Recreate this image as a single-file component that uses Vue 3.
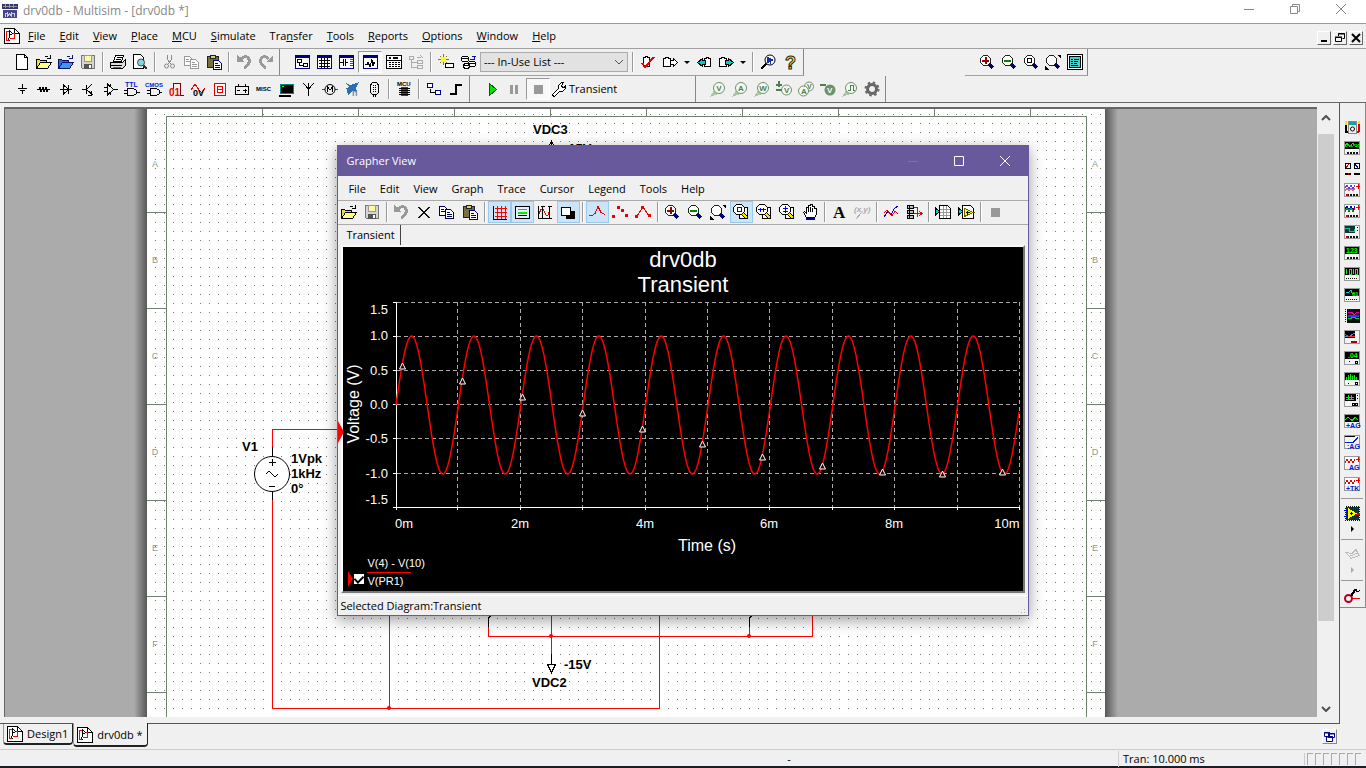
<script setup>
import { h, ref } from 'vue'

const p = (d, stroke = '#000', fill = 'none', w = 1) =>
  `<path d="${d}" stroke="${stroke}" fill="${fill}" stroke-width="${w}"/>`
const t = (text, x, y, size, fill = '#000', extra = '') =>
  `<text x="${x}" y="${y}" font-size="${size}" fill="${fill}" font-weight="bold" ${extra}>${text}</text>`
const c = (x, y, r, stroke, fill = 'none', w = 1) =>
  `<circle cx="${x}" cy="${y}" r="${r}" stroke="${stroke}" fill="${fill}" stroke-width="${w}"/>`

const pane = p('M1.5 1.5h14v13h-14z', '#000080', '#fff') + p('M1 2.5h15', '#000080', 'none', 2)
const page = p('M2.5.5h8l3 3v12h-11z', '#000', '#fff') + p('M10.5.5v3h3')
const folder = (stroke, a, b) =>
  p('M.5 14.5v-9h3l1 1h6v2', stroke, a) +
  p('M.5 14.5l4-6h11l-4 6z', stroke, b) +
  p('M8.5 3.5q2-3 4 0M11 4.5h4M14.5 4.5v-4', stroke)
const copy = (s) =>
  p('M.5 2.5h5l3 3v6h-8z', s, '#fff') + p('M2 5.5h3M2 7.5h5', s) +
  p('M6.5 5.5h5l3 3v6h-8z', s, '#fff') + p('M8 8.5h3M8 10.5h5M8 12.5h5', s)
const lens = (inner) =>
  p('M10 10l4 4', '#000080', 'none', 3) +
  p('M4.5 1.5h4l3 3v4l-3 3h-4l-3-3v-4z', '#222', '#fff') + inner
const pageLens = (inner) =>
  p('M6.5 3.5h8v11h-8z', '#000', '#fff') +
  p('M9 9l5 5', '#000', 'none', 4) + p('M10 10l4 4', '#ffe800', 'none', 2) +
  p('M3.5.5h5l3 3v4l-3 3h-5l-3-3v-4z', '#000', '#fff') + inner
const probe = (inner) => p('M1 15l3-5 3 3z', '#a8c8a8', '#a8c8a8') + c(9, 7, 5.5, '#6a946a', '#f4f8f4') + inner
const pv = (s) => t(s, 9, 10, 8, '#4f8050', 'text-anchor="middle"')
// bench instrument: screen on top, terminals underneath
const bench = (screen, foot) => p('M.5 1.5h15v13h-15z', '#999', '#f4f4f4') + screen + foot
const scr = (d, s = '#00f000', bg = '#000') => p('M1 2h14v7H1z', 'none', bg) + p(d, s)
const pins = '<path d="M3 12.5h11" stroke="#111" stroke-width="2" stroke-dasharray="2 1"/>'
const finePins = '<path d="M2 12.5h12" stroke="#111" stroke-dasharray="1 1"/>'
const redPins = pins + p('M2 12.5h2', '#d00', 'none', 2)
const plus = p('M12 4.5h4M14.5 2v5', '#e00')
const chip = p('M1.5 4.5h2v-1h3v1h2v8h-7z', '#000', '#fff')

const icons = {
  app:
    p('M0 1h16v5H0z', 'none', '#35356b') + p('M1 3.5h14M3.5 1v4M7.5 1v4M11.5 1v4', '#99a') +
    p('M1 7h14v8H1z', 'none', '#45458b') + p('M3.5 14v-3l2-1v3l2-2 2 2v-3l3 1v3', '#ccd'),
  design:
    p('M.5.5h10l5 5v10H.5z', '#000', '#fff') + p('M10.5.5v5h5') +
    p('M2 3.5h3M2.5 4v8M2 12.5h3M9 5.5h1.5v5h-5', '#f00') + p('M5.5 2.5l3 3-3 2zM5.5 8.5l-1 3 2 2'),
  doc: page,
  open: folder('#000', '#e8d850', '#ffff80'),
  openBlue: folder('#10106a', '#1c78d8', '#3a98f0'),
  save:
    p('M1.5 1.5h13v13h-12l-1-1z', '#777', '#d4d4d4') + p('M4.5 1.5h7v6h-7z', '#999', '#fff8a0') +
    p('M4 10h8v5H4z', 'none', '#555') + p('M10 11v3', '#fff', 'none', 2),
  print:
    p('M3.5 7.5l2-6h8l-2 6z', '#000', '#fff') + p('M7 3.5h5M6 5.5h5') +
    p('M.5 8.5h12l3-3v6l-3 3h-11l-1-1z', '#000', '#ddd') + p('M1 11.5h11') + p('M3 13h8', '#666'),
  preview: p('M1.5.5h7l3 3v11h-10z', '#000', '#fff') + p('M11 11l4 4', '#333', 'none', 2) + c(9, 8.5, 3.5, '#444', '#7fd8e8'),
  cut: p('M5.5 1v4l3 5M9.5 1v4l-3 5', '#888') + c(4.5, 12, 2, '#888') + c(10.5, 12, 2, '#888'),
  copyOff: copy('#999'),
  copy: copy('#000050'),
  paste:
    p('M1.5 2.5h11v11h-11z', '#222', '#77703a') + p('M4.5 1.5h5v3h-5z', '#222', '#d8d080') +
    p('M7.5 6.5h5l3 3v6h-8z', '#000080', '#fff') + p('M9 9.5h3M9 11.5h5M9 13.5h5', '#000080'),
  undo: p('M1 1v7h7z', 'none', '#999') + p('M5 5q5-5 8 0 2 5-5 9', '#999', 'none', 3),
  redo: p('M15 1v7H8z', 'none', '#999') + p('M11 5q-5-5-8 0-2 5 5 9', '#999', 'none', 3),
  net: pane + p('M3.5 5.5h4v3h-4zM9.5 9.5h4v3h-4zM5.5 9v2.5h4'),
  sheet: pane + p('M3 6.5h11M3 9.5h11M3 12.5h11M5.5 4v10M8.5 4v10M11.5 4v10'),
  cap: pane + p('M2 8.5h3M5.5 5v7M7.5 5v7M8 8.5h2') + p('M12 5.5h3M12 7.5h3M12 9.5h3M12 11.5h3', '#f00'),
  scope: pane + p('M3 10.5h2l1-2 2 4 2-7 1 6 1-3 1 1'),
  calc: p('M.5 1.5h15v13H.5z', '#000', '#fff') + p('M3 4h2M7 4h5', '#000', 'none', 2) + p('M1 6.5h14') + '<path d="M3 8.5h11M3 10.5h11M3 12.5h11" stroke="#000" stroke-dasharray="2 1"/>',
  tree: p('M1.5 2.5h4v3h-4zM9.5 6.5h5v3h-5zM9.5 11.5h5v3h-5zM3.5 6v7h6M3.5 8.5h6M9 3.5h4M12.5 1l2 3', '#aaa'),
  wizard: p('M5.5 0v11M0 5.5h11M2 2l7 7M9 2l-7 7', '#887800') + p('M3 3h5v5H3z', 'none', '#ff0') + p('M7.5 9.5h8v4h-8z', '#000', '#fff'),
  db:
    ['M1.5 3.5q3.5-3 7 0v3q-3.5 3-7 0zM1.5 3.5q3.5 3 7 0', 'M8.5 8.5q3.5-3 7 0v3q-3.5 3-7 0zM8.5 8.5q3.5 3 7 0', 'M3.5 10.5q3-2 6 0v3q-3 2-6 0zM3.5 10.5q3 2 6 0']
      .map((d) => p(d, '#000', '#fff')).join('') + p('M10 5.5h4v-3M12 2.5h4', '#0010c0'),
  erc: p('M3.5 12.5v-9h2v-1h2v1h2v9z', '#000', '#fff') + p('M2 9l3 4 9-10', '#e00', 'none', 2),
  fwd: chip + p('M8.5 6.5h3v-2l4 4-4 4v-2h-3z', '#000', '#fff'),
  back: p('M8.5 4.5h2v-1h2v1h2v8h-6z', '#000', '#fff') + p('M9.5 6.5h-3v-2l-5 4 5 4v-2h3z', '#000', '#0cc'),
  fwdC: chip + p('M7.5 6.5h3v-2l5 4-5 4v-2h-3z', '#000', '#0cc'),
  find: p('M1 15l6-6', '#000', 'none', 2) + c(10, 6, 5, '#000', '#fff') + p('M7 3l6 3-6 3z', '#1030a0', '#1030a0') + p('M10.5 6v4', '#1030a0'),
  help: t('?', 3, 15, 18, '#ffe800', 'stroke="#222" stroke-width="1"'),
  zoomIn: lens(p('M3 6.5h7M6.5 3v7', '#900', 'none', 2)),
  zoomOut: lens(p('M3 6.5h7', '#080', 'none', 2)),
  zoomArea: lens(p('M4.5 4.5h4v4h-4z')),
  zoomFit: lens('') + p('M12 1h4v4zM0 12v4h4z', 'none', '#000'),
  full: p('M.5.5h15v15H.5z', '#000', '#fff') + p('M2.5 2.5h11v11h-11z', '#000', '#40d0d0') + p('M4 5.5h2M7 5.5h5M4 7.5h2M7 7.5h4M4 9.5h2M7 9.5h3M4 11.5h7'),
  power: p('M8.5 3v4M4 7.5h9M6 9.5h5M8.5 10v3'),
  resistor: p('M1 8.5h2l1-2 1 4 2-4 1 4 2-4 1 4 1-2h2'),
  diode: p('M2 8.5h12M10.5 4v9M5.5 4v9l5-4.5z'),
  transistor: p('M2 8.5h4M6.5 4v9M7 8l5-5M7 9l6 5M11 10v4h-3'),
  analog: p('M5.5 3v11l6-5.5zM2 6.5h3M2 10.5h3M12 8.5h4M8.5 3v2M8.5 12v2'),
  ttl: p('M3.5 7.5h4q5 0 5 3.5t-5 3.5h-4zM0 9.5h3M0 12.5h3M13 11.5h3') + t('TTL', 1, 6, 7, '#0020e0'),
  cmos: p('M4.5 7.5h4q5 0 5 3.5t-5 3.5h-4zM1 9.5h3M1 12.5h3M14 11.5h2') + t('CMOS', -1, 6, 6, '#0020e0'),
  digital: p('M5.5 8v-6h7v12h3', '#800000') + t('01', 1, 15, 10, '#e00'),
  mixed: p('M1 9l4-6 4 6M9 9l3 3 3-5', '#e00') + t('0V', 3, 15, 9),
  indicator: p('M2.5 2.5h11v12h-11z', '#e00', '#fff') + p('M5 5.5h6M5 8.5h6M5 11.5h6M5.5 6v5M10.5 6v5', '#e00'),
  battery: p('M1.5 5.5h13v8h-13zM4.5 3v2M11.5 3v2M3 9.5h3M9 9.5h4M11.5 8v4'),
  misc: t('MISC', 0, 10, 6),
  terminal: p('M2.5 3.5h13v9h-13z', '#088', '#000') + p('M4 5.5h2', '#0f0') + p('M1 14.5h12', '#000', 'none', 2),
  antenna: p('M8.5 15v-13M3 2l5.5 6L14 2'),
  motor: p('M0 8.5h3M13 8.5h3', '#e00') + c(8, 8.5, 5, '#000') + p('M5.5 11v-5l2.5 3 2.5-3v5'),
  ni: p('M0 1l6 3 9-3-3 6 1 4-5-1-4 5-1-6-1-2 3-1z', 'none', '#2a6fb0') + t('n', 8, 15, 9, '#888'),
  connector: p('M5.5 2.5l1-1h4l1 1 1 2v7l-2 2h-4l-2-2v-7zM7.5 14v2M9.5 14v2') + '<path d="M7.5 4v8M9.5 4v8" stroke="#000" stroke-dasharray="1 1"/>',
  mcu: t('MCU', 1, 5, 6) + p('M5 6h7v9H5z', 'none', '#444') + p('M3 7.5h11M3 9.5h11M3 11.5h11M3 13.5h11'),
  hier: p('M1.5 2.5h5v4h-5zM9.5 9.5h5v4h-5z', '#000080', '#fff') + p('M4.5 8v3.5h4'),
  bus: p('M2 13h6V4h6', '#000', 'none', 2),
  play: p('M5.5 2.5l7 6-7 6z', '#006000', '#00e800'),
  pause: p('M5.5 4v9M10.5 4v9', '#999', 'none', 3),
  stop: p('M4 4h9v9H4z', 'none', '#999'),
  wrench: p('M1.5 13.5l6-6v-3l3-3h2l-2 3 1 2h2l1-2v3l-3 3h-3l-5 5-2-1z', '#000', '#fff'),
  pV: probe(pv('V')),
  pA: probe(pv('A')),
  pW: probe(pv('W')),
  pPM: c(10.5, 9, 5, '#6a946a', '#f4f8f4') + t('V', 8, 12, 8, '#4f8050') + p('M0 3.5h6M3 0v6M0 8.5h6', '#4f8050', 'none', 2),
  pAV: c(11, 5.5, 4.5, '#6a946a', '#f4f8f4') + c(5.5, 10, 5, '#6a946a', '#f4f8f4') + t('A', 3, 13, 8, '#4f8050') + t('V', 9, 8, 7, '#4f8050'),
  pRef: c(10, 9, 5.5, 'none', '#6a946a') + t('V', 7, 12, 8, '#fff') + p('M0 3.5h6', '#4f8050', 'none', 2),
  pDig: probe(p('M6 9.5h2v-5h3v5h2', '#4f8050')),
  gear: c(8, 8, 4.5, '#666', 'none', 3) + '<circle cx="8" cy="8" r="6.5" fill="none" stroke="#666" stroke-width="2" stroke-dasharray="2.5 2.6"/>',
  del: p('M3 3l10 11M13 3L3 14', '#111', 'none', 1.5),
  grid: p('M2.5 2v13.5H16') + p('M4 4.5h12M4 8.5h12M4 12.5h12M6.5 2v13M10.5 2v13M14.5 2v13', '#f00'),
  legend: p('M1.5 2.5h14v12h-14z', '#000', '#e8f0f8') + p('M4 5.5h9', '#f44') + p('M4 8.5h9', '#0e0', 'none', 2) + p('M4 11.5h9', '#000080'),
  cursors: p('M1.5 2v13M1 14.5h14') + p('M2 10l2-5 2 0 3 6h2l2-6', '#e00') + p('M5.5 2v12M12.5 2v12M4 2.5h4M11 2.5h4'),
  invert: p('M6 7h9v8H6z', 'none', '#000') + p('M1.5 3.5h9v8h-9z', '#000', '#fff'),
  curve: p('M0 11.5h3l3-2 3-7 3 6 4 2', '#e00'),
  dots: p('M0 11h3v3H0zM5 2h3v3H5zM9 5h3v3H9zM13 10h3v3h-3z', 'none', '#e00'),
  both: p('M2 12l6-9 6 9', '#e00') + p('M0 11h3v3H0zM6 2h3v3H6zM13 10h3v3h-3z', 'none', '#e00'),
  zRect: pageLens(p('M4.5 3.5h4v4h-4z', '#00f')),
  zHor: pageLens(p('M2 5.5h8M4.5 3.5v4M7.5 3.5v4', '#00f')),
  zVer: pageLens(p('M6.5 2v7M4 4.5h5M4 7.5h5', '#00f')),
  hand: p('M4.5 13.5l-3-5 1-1 2 2v-6h2v-2h2v-1h2v2h2v2h2v6l-2 3z', '#000', '#fff') + p('M6.5 4v4M8.5 3v5M10.5 4v4') + p('M4 15h9', '#000080', 'none', 2),
  text: t('A', 2, 14, 17, '#000', 'style="font-family:Liberation Serif,serif"'),
  xy: t('(x,y)', 0, 8, 8, '#aaa', 'font-style="italic"') + p('M2 15l5-6', '#aaa'),
  overlay: p('M1 13l4-6 3 4 3-6 4-3', '#00c') + p('M1 9l3-3 5 6 3-5 3 3', '#e00'),
  digin: p('M1.5 1.5h6v3h-6zM1.5 6.5h6v3h-6zM1.5 11.5h6v3h-6zM3.5 1v13', '#000', '#bbb') + p('M8 3.5h3v9M8 9.5h7M13 7l3 2.5-3 2.5', '#e00'),
  table: p('M4.5 1.5h8l3 3v10h-11z', '#000', '#fff') + p('M5 5.5h10M5 8.5h10M5 11.5h10M8.5 2v12M11.5 2v12', '#999') + p('M.5 4v7l4-3.5z', '#000', '#0cc'),
  lab: p('M4.5 1.5h8l3 3v10h-11z', '#000', '#fff') + p('M6.5 4.5l9 4-9 4z', '#660', '#ff0') + p('M.5 4v7l4-3.5z', '#000', '#0cc') + p('M8 8.5h4M9.5 7v4'),
  multimeter:
    p('M4.5 2.5h8v12h-8z', '#888', '#eee') + p('M5 4h7', '#0aa', 'none', 3) + c(8.5, 10, 2, '#000', '#fff') +
    p('M2 2v4', '#fd0', 'none', 2) + p('M2 6v7h2', '#000', 'none', 2) + p('M15 2v3', '#fd0', 'none', 2) + p('M15 5v7l-2 2', '#d00', 'none', 2),
  func: bench(scr('M1 6l2-3 3 4 3-4 3 4 3-3') + p('M1 7l4-2 3 2 4-3 3 3', '#0a0'), pins),
  watt: p('M1.5 2.5h5v5h-5zM10.5 2.5h5v5h-5z', '#000', '#fff') + p('M2 7l3-4', '#c00') + p('M14 7l-3-4', '#00c') + p('M1 12.5h6M10 12.5h6', '#000', 'none', 2) + p('M4 12.5h1', '#c00', 'none', 2),
  osc: bench(scr('M1 5.5l2-2 2 3 2-3 2 3 2-3', '#44f', '#fff') + p('M1 8.5l2-2 2 2 2-2 2 2 2-2', '#e66') + plus, redPins),
  osc4: bench(scr('M1 8.5l2-3 2 3 2-3 2 3 2-3', '#e00', '#fff') + p('M1 5.5l2-2 2 3 2-3 2 3 2-3', '#00c') + p('M1 7l2-2 2 3 2-3 2 3', '#0a0') + plus, redPins),
  bode: bench(scr('M1 4.5h4v3h5v-3', '#0c8', '#083838') + p('M11 2h4v7h-4z', 'none', '#f4f4f4') + p('M13.5 3v1M13.5 6v1'), redPins),
  freq: bench(scr('') + t('123', 2, 8, 7, '#0f0'), pins),
  word: bench(scr('M2.5 3v5M5.5 3v5h2v-5zM9.5 3v5M11.5 3v5h2v-5z', '#0f0'), finePins),
  convert: bench(scr('M2 5h3q3-4 3 1h2', '#0cc') + t('01', 8, 9, 6, '#0f0'), finePins),
  logic: p('M3 1h13v14H3z', 'none', '#111') + p('M4 4.5h4l2 2 3-2h2', '#e0a') + p('M4 7.5h11', '#33f', 'none', 2) + p('M4 10.5h3v-1h4v1h4', '#0c0') + '<path d="M1.5 1v14" stroke="#111" stroke-dasharray="1 1"/>',
  iv: bench(scr('M1 7.5h4l5-3h1', '#38f') + p('M1 5.5l4 2h6', '#e33') + p('M11 2h4v7h-4z', 'none', '#f4f4f4'), p('M7 12.5h6', '#a00', 'none', 2)),
  dist: bench(scr('') + t('.04', 4, 8, 7, '#0f0'), p('M11.5 11.5h2v2h-2zM5 11.5h1')),
  spec: bench(scr('M2.5 9v-3M4.5 9v-5M6.5 9v-6M8.5 9v-4M10.5 9v-5M12.5 9v-3'), p('M11.5 11.5h2v2h-2zM4 12.5h1')),
  netan: bench(scr('M2 5.5h8M2 7.5h8M4.5 3v5M7.5 3v5') + p('M12 2h3v7h-3z', 'none', '#f4f4f4') + p('M13.5 3v1M13.5 6v1'), p('M8.5 11.5h2v2h-2zM11.5 11.5h2v2h-2z')),
  agGen: bench(scr('M1 6.5l3-2 4 3 3-3 3 2'), t('+AG', 2, 15, 7, '#0020d0')),
  agMul: bench(p('M1 8.5h8l5-5', '#0020d0') + p('M1 2.5h10'), t(':AG', 3, 15, 7, '#0020d0')),
  agOsc: bench(scr('M1 7.5l2-3 2 3 2-3 2 3 2-3', '#e00', '#fff') + plus, t('AG', 5, 15, 7, '#0020d0')),
  tkOsc: bench(scr('M1 7.5l2-3 2 3 2-3 2 3 2-3', '#e00', '#fff') + plus, t('+TK', 2, 15, 7, '#0020d0')),
  labview: p('M2 2h13v13H2z', 'none', '#063838') + '<path d="M1.5 1.5h14v14h-14z" fill="none" stroke="#111" stroke-dasharray="1 1"/>' + p('M0 5.5h4M0 11.5h4', '#00f') + p('M12 8.5h4', '#e00', 'none', 2) + p('M4 3l9 5.5L4 14z', 'none', '#ff0') + p('M6 8.5h3M7.5 7v3'),
  elvis: p('M2 6.5l5 6 8-3-3-6-4 4z', '#bbb') + p('M6 10l8-3', '#bbb'),
  clamp: c(4.5, 11.5, 3.5, '#b00020', 'none', 2) + p('M7 9l4-6', '#000', 'none', 2) + p('M10 2.5h2v2h2l2-1') + p('M8 11.5h8', '#e00')
}

const Icon = ({ name }) => h('svg', { class: 'icon', viewBox: '0 0 16 16', 'aria-hidden': true, innerHTML: icons[name] })
Icon.props = ['name']

// '|' is a separator, a trailing '>' adds a drop-down arrow, a leading '*' is pressed
const parse = (s) =>
  s.split(' ').map((k) => ({
    sep: k === '|',
    on: k[0] === '*',
    more: k.endsWith('>'),
    name: k.replace(/[*>]/g, '')
  }))

const menus = ['File', 'Edit', 'View', 'Place', 'MCU', 'Simulate', 'Tra_nsfer', 'Tools', 'Reports', 'Options', 'Window', 'Help'].map((m) => {
  const i = Math.max(m.indexOf('_'), 0)
  const s = m.replace('_', '')
  return [s.slice(0, i), s[i], s.slice(i + 1)]
})
const fileBar = parse('doc open openBlue save | print preview | cut copyOff paste | undo redo')
const viewBar = parse('net sheet cap *scope calc tree | wizard db')
const toolBar = parse('| erc fwd> back fwdC> | find help')
const zoomBar = parse('zoomIn zoomOut zoomArea zoomFit full')
const partsBar = parse('power resistor diode transistor analog ttl cmos digital mixed indicator battery misc terminal antenna motor ni connector | mcu | hier bus')
const simBar = parse('play pause *stop')
const probeBar = parse('pV pA pW pPM pAV pRef pDig gear')
const graphBar = parse('open save | undo del copy paste | *grid *legend cursors *invert | *curve dots both | zoomIn zoomOut zoomFit *zRect zHor zVer hand | text xy | overlay digin | table lab | stop')
const instruments = parse('multimeter func watt osc osc4 bode freq word convert logic iv dist spec netan agGen agMul agOsc tkOsc | labview> | elvis> | clamp')
const graphMenus = ['File', 'Edit', 'View', 'Graph', 'Trace', 'Cursor', 'Legend', 'Tools', 'Help']

const rows = ['A', 'B', 'C', 'D', 'E', 'F'].map((name, i) => ({ name, y: 167 + i * 96, tick: 212 + i * 96 }))
const colTicks = Array.from({ length: 9 }, (_, i) => 262 + i * 96)

const traceOn = ref(true)
const X0 = 396
const Y0 = 405
const MS = 62.4
const volts = (x) => Y0 - 69 * Math.sin(((x - X0) / MS) * 2 * Math.PI)
const wave = Array.from({ length: 624 }, (_, i) => `${X0 + i},${volts(X0 + i).toFixed(1)}`).join(' ')
const marks = Array.from({ length: 11 }, (_, i) => 402 + i * 60).map((x) => ({ x, y: Math.round(volts(x)) }))
const yAxis = [
  { label: '1.5', y: 302, text: 314 },
  { label: '1.0', y: 336, text: 340 },
  { label: '0.5', y: 370, text: 375 },
  { label: '0.0', y: 404, text: 409 },
  { label: '-0.5', y: 438, text: 443 },
  { label: '-1.0', y: 473, text: 478 },
  { label: '-1.5', y: 507, text: 504 }
]
const xAxis = [
  { label: '0m', x: 404 },
  { label: '2m', x: 520 },
  { label: '4m', x: 645 },
  { label: '6m', x: 769 },
  { label: '8m', x: 894 },
  { label: '10m', x: 1007 }
]
const xGrid = Array.from({ length: 10 }, (_, i) => Math.round(X0 + (i + 1) * MS) - 1)
</script>

<template>
  <div class="app">
    <header class="titlebar">
      <Icon name="app" />
      <h1>drv0db - Multisim - [drv0db *]</h1>
      <div class="caption">
        <button aria-label="Minimize"><svg viewBox="0 0 12 12"><path d="M1 6.5h10" /></svg></button>
        <button aria-label="Restore"><svg viewBox="0 0 12 12"><path d="M1.5 3.5h7v7h-7zM3.5 3v-1.5h7v7h-1.5" /></svg></button>
        <button aria-label="Close"><svg viewBox="0 0 12 12"><path d="M1 1l10 10M11 1L1 11" /></svg></button>
      </div>
    </header>

    <nav class="menubar">
      <Icon name="design" />
      <button v-for="m in menus" :key="m.join('')">{{ m[0] }}<u>{{ m[1] }}</u>{{ m[2] }}</button>
      <div class="mdi">
        <button aria-label="Minimize document"><svg viewBox="0 0 12 12"><path d="M3 9h6" stroke-width="2" /></svg></button>
        <button aria-label="Restore document"><svg viewBox="0 0 12 12"><path d="M1.5 5.5h6v4h-6zM1 5h7M4.5 4v-2.5h6v5h-2M4 2h7" /></svg></button>
        <button aria-label="Close document"><svg viewBox="0 0 12 12"><path d="M2 2l8 8M10 2l-8 8" stroke-width="2" /></svg></button>
      </div>
    </nav>

    <div class="toolrow">
      <div class="group">
        <template v-for="(b, i) in fileBar" :key="i">
          <i v-if="b.sep" class="sep"></i>
          <button v-else class="tool" :aria-label="b.name"><Icon :name="b.name" /></button>
        </template>
      </div>
      <div class="group view">
        <template v-for="(b, i) in viewBar" :key="i">
          <i v-if="b.sep" class="sep"></i>
          <button v-else class="tool" :class="{ pressed: b.on }" :aria-label="b.name"><Icon :name="b.name" /></button>
        </template>
        <div class="inuse">
          <select aria-label="In-use list"><option>--- In-Use List ---</option></select>
          <svg viewBox="0 0 10 6"><path d="M1 1l4 4 4-4" /></svg>
        </div>
        <template v-for="(b, i) in toolBar" :key="i">
          <i v-if="b.sep" class="sep"></i>
          <button v-else class="tool" :aria-label="b.name"><Icon :name="b.name" /></button>
          <button v-if="b.more" class="more" :aria-label="b.name + ' options'"></button>
        </template>
      </div>
      <div class="group zoom">
        <button v-for="b in zoomBar" :key="b.name" class="tool" :aria-label="b.name"><Icon :name="b.name" /></button>
      </div>
    </div>

    <div class="toolrow second">
      <div class="group">
        <template v-for="(b, i) in partsBar" :key="i">
          <i v-if="b.sep" class="sep"></i>
          <button v-else class="tool" :aria-label="b.name"><Icon :name="b.name" /></button>
        </template>
      </div>
      <div class="group sim">
        <button v-for="b in simBar" :key="b.name" class="tool" :class="{ pressed: b.on }" :aria-label="b.name"><Icon :name="b.name" /></button>
        <button class="analysis"><Icon name="wrench" />Transient</button>
      </div>
      <div class="group">
        <button v-for="b in probeBar" :key="b.name" class="tool" :aria-label="b.name"><Icon :name="b.name" /></button>
      </div>
    </div>

    <div class="body">
      <main class="main">
        <div class="editor">
          <div class="canvas">
            <div class="desk left"></div>
            <div class="sheet">
              <svg class="schematic" viewBox="147 109 958 608">
                <defs>
                  <pattern id="dots" x="155" y="114" width="9" height="9" patternUnits="userSpaceOnUse">
                    <rect width="1" height="1" fill="#777" />
                  </pattern>
                </defs>
                <rect x="147" y="109" width="958" height="608" fill="url(#dots)" />
                <g class="frame">
                  <path d="M166.5 717V116.5h920V717" />
                  <path v-for="x in colTicks" :key="x" :d="`M${x}.5 109v7`" />
                  <path v-for="r in rows" :key="r.name" :d="`M147 ${r.tick}.5h19M1087 ${r.tick}.5h18`" />
                </g>
                <g v-for="r in rows" :key="r.name" class="zone">
                  <text x="155" :y="r.y">{{ r.name }}</text>
                  <text x="1095" :y="r.y">{{ r.name }}</text>
                </g>
                <g class="wire">
                  <path d="M340 429.5h-67.5V447M272.5 500V708.5h387V610M389.5 610v98" />
                  <path d="M488.5 627v9.5h324V610M551.5 610v44M749.5 627v9" />
                </g>
                <g class="dot">
                  <circle cx="389" cy="708" r="2" />
                  <circle cx="551" cy="636" r="2" />
                  <circle cx="749" cy="636" r="2" />
                </g>
                <g class="part">
                  <circle cx="272" cy="474" r="17.5" />
                  <path d="M272.5 447v10M272.5 491v9M269 462.5h7M272.5 459v7M269 486.5h6M266 474l3-3 3 3 3 3 3-3" />
                  <path d="M488.5 627v-9l3-3M749.5 627v-9l3-3M551.5 654v10M547.5 664.5h8l-4 8zM551.5 140v14M549 145l2.5-3 2.5 3" />
                </g>
                <g class="label">
                  <text x="242" y="451">V1</text>
                  <text x="291" y="463">1Vpk</text>
                  <text x="291" y="478">1kHz</text>
                  <text x="291" y="493">0°</text>
                  <text x="533" y="134">VDC3</text>
                  <text x="564" y="153">-15V</text>
                  <text x="564" y="669">-15V</text>
                  <text x="532" y="687">VDC2</text>
                </g>
              </svg>

              <section class="grapher" aria-label="Grapher View">
                <svg class="probe" viewBox="0 0 6 22"><path d="M0 0l6 11-6 11z" /></svg>
                <header>
                  <h2>Grapher View</h2>
                  <button aria-label="Minimize grapher" disabled><svg viewBox="0 0 12 12"><path d="M1 6.5h10" /></svg></button>
                  <button aria-label="Maximize grapher"><svg viewBox="0 0 12 12"><path d="M1.5 1.5h9v9h-9z" /></svg></button>
                  <button aria-label="Close grapher"><svg viewBox="0 0 12 12"><path d="M1 1l10 10M11 1L1 11" /></svg></button>
                </header>
                <nav><button v-for="m in graphMenus" :key="m">{{ m }}</button></nav>
                <div class="gtools">
                  <template v-for="(b, i) in graphBar" :key="i">
                    <i v-if="b.sep" class="sep"></i>
                    <button v-else class="tool" :class="{ active: b.on }" :aria-label="b.name"><Icon :name="b.name" /></button>
                  </template>
                </div>
                <div class="gtabs"><button>Transient</button></div>
                <div class="plot">
                  <svg class="chart" viewBox="343 247 680 308">
                    <g class="title">
                      <text x="683" y="267">drv0db</text>
                      <text x="683" y="292">Transient</text>
                    </g>
                    <g class="gridlines">
                      <path v-for="r in yAxis.slice(0, 6)" :key="r.y" :d="`M397 ${r.y}.5H1020`" />
                      <path v-for="x in xGrid" :key="x" :d="`M${x}.5 302V507`" />
                    </g>
                    <g class="axis">
                      <path d="M396.5 302V507.5H1020M396.5 507v3" />
                      <path v-for="r in yAxis" :key="r.y" :d="`M393 ${r.y}.5h4`" />
                      <path v-for="x in xGrid" :key="x" :d="`M${x}.5 507v3`" />
                    </g>
                    <text v-for="r in yAxis" :key="r.label" x="388" :y="r.text" class="tick end">{{ r.label }}</text>
                    <text v-for="a in xAxis" :key="a.label" :x="a.x" y="528" class="tick mid">{{ a.label }}</text>
                    <text x="707" y="551" class="name">Time (s)</text>
                    <text transform="translate(359 404) rotate(-90)" class="name">Voltage (V)</text>
                    <g v-if="traceOn">
                      <polyline :points="wave" class="trace" />
                      <path v-for="m in marks" :key="m.x" :d="`M${m.x}.5 ${m.y - 3}l3 6h-6z`" class="mark" />
                    </g>
                  </svg>
                  <div class="glegend">
                    <svg viewBox="0 0 5 16"><path d="M0 0l5 8-5 8z" /></svg>
                    <input id="trace" v-model="traceOn" type="checkbox" />
                    <label for="trace"><span>V(4) - V(10)</span><span>V(PR1)</span></label>
                  </div>
                </div>
                <footer>Selected Diagram:Transient<i class="grip"></i></footer>
              </section>
            </div>
            <div class="desk right"></div>
          </div>
          <div class="scroll">
            <button aria-label="Scroll up"><svg viewBox="0 0 10 6"><path d="M1 5l4-4 4 4" /></svg></button>
            <div class="track"><div class="thumb"></div></div>
            <button aria-label="Scroll down"><svg viewBox="0 0 10 6"><path d="M1 1l4 4 4-4" /></svg></button>
          </div>
        </div>
        <div class="tabs">
          <button><Icon name="design" />Design1</button>
          <button class="current"><Icon name="design" />drv0db *</button>
          <button class="windows" aria-label="Windows">
            <svg viewBox="0 0 12 12"><path d="M1.5 1.5h5v4h-5zM5.5 2.5h6v4h-6zM3.5 5.5h6v5h-6zM1 2h6M5 3h7M3 6h7" /></svg>
          </button>
        </div>
      </main>
      <aside class="instruments">
        <div class="rack">
          <template v-for="(b, i) in instruments" :key="i">
            <i v-if="b.sep" class="hsep"></i>
            <button v-else class="tool" :aria-label="b.name"><Icon :name="b.name" /></button>
            <button v-if="b.more" class="flyout" :class="{ off: b.name === 'elvis' }" :aria-label="b.name + ' options'"></button>
          </template>
        </div>
      </aside>
    </div>

    <footer class="status">
      <span class="msg">-</span>
      <span class="tran">Tran: 10.000 ms</span>
      <span class="progress"><i v-for="n in 7" :key="n"></i></span>
    </footer>
  </div>
</template>

<style>
body {
  background: #f0f0f0;
  overflow: hidden;
}
.icon {
  display: block;
  flex: none;
  width: 16px;
  height: 16px;
  overflow: visible;
  shape-rendering: crispEdges;
  font-family: 'Liberation Sans', Arial, sans-serif;
}
.icon circle {
  shape-rendering: auto;
}
</style>

<style scoped>
* {
  box-sizing: border-box;
}
.app {
  display: flex;
  flex-direction: column;
  height: 100vh;
  background: #f0f0f0;
  border-bottom: 2px solid #1c1c24;
  font: 11px/16px 'Open Sans', 'Noto Sans', sans-serif;
  color: #000;
}
button {
  font: inherit;
  color: inherit;
  background: none;
  border: 0;
  padding: 0;
  margin: 0;
}
h1,
h2 {
  font-size: 11px;
  font-weight: normal;
  margin: 0;
}

.titlebar {
  display: flex;
  align-items: flex-start;
  height: 24px;
  padding: 3px 2px 0;
  background: #fff;
  border-bottom: 1px solid #999;
}
.titlebar h1 {
  flex: 1;
  margin-left: 5px;
  font-size: 12px;
  color: #888;
}
.caption {
  display: flex;
}
.caption button {
  width: 46px;
  height: 16px;
}
.caption svg {
  width: 12px;
  height: 12px;
  fill: none;
  stroke: #888;
}

.menubar {
  display: flex;
  align-items: center;
  height: 25px;
  padding: 0 3px 0 4px;
  border-bottom: 1px solid #a0a0a0;
}
.menubar > button {
  margin-left: 14px;
}
.menubar > .icon + button {
  margin-left: 8px;
}
.mdi {
  display: flex;
  gap: 2px;
  margin: 4px 0 0 auto;
}
.mdi button {
  display: grid;
  place-items: center;
  width: 14px;
  height: 14px;
  border: 1px solid;
  border-color: #fff #666 #666 #fff;
}
.mdi svg {
  width: 12px;
  height: 12px;
  fill: none;
  stroke: #000;
}

.toolrow {
  display: flex;
  height: 27px;
}
.toolrow.second {
  height: 26px;
}
.group {
  display: flex;
  align-items: center;
  padding: 0 2px 0 11px;
  border-right: 1px solid #888;
  border-bottom: 1px solid #a0a0a0;
}
.second .group {
  border-bottom: 0;
}
.view {
  padding-right: 2px;
}
.zoom {
  margin-left: 161px;
  padding-right: 1px;
}
.sim {
  width: 226px;
}
.tool {
  display: grid;
  place-items: center;
  flex: none;
  width: 22px;
  height: 22px;
}
.pressed {
  width: 24px;
  margin: 0 1px;
  background: #f8f8f8;
  border: 1px solid;
  border-color: #999 #fff #fff #999;
}
.sep {
  flex: none;
  width: 2px;
  height: 20px;
  margin: 0 3px;
  border-left: 1px solid #999;
  border-right: 1px solid #fff;
}
.more {
  width: 12px;
  height: 22px;
  display: grid;
  place-items: center;
}
.more::after {
  content: '';
  border: 3px solid transparent;
  border-top-color: #000;
  border-bottom: 0;
}
.inuse {
  position: relative;
  margin: 0 1px;
}
.inuse select {
  display: block;
  width: 148px;
  height: 20px;
  padding: 0 3px;
  appearance: none;
  border: 1px solid #aaa;
  border-radius: 0;
  background: #e2e2e2;
  color: #000;
  font: inherit;
}
.inuse svg {
  position: absolute;
  right: 4px;
  top: 7px;
  width: 10px;
  height: 6px;
  fill: none;
  stroke: #555;
}
.analysis {
  display: flex;
  align-items: center;
  gap: 2px;
}

.body {
  flex: 1;
  display: flex;
  min-height: 0;
  border-top: 1px solid #666;
}
.main {
  flex: 1;
  display: flex;
  flex-direction: column;
  min-width: 0;
}
.editor {
  flex: 1;
  display: flex;
  min-height: 0;
  padding: 4px 5px 6px 4px;
  border-right: 1px solid #555;
  border-bottom: 1px solid #555;
}
.canvas {
  flex: 1;
  display: flex;
  overflow: hidden;
  border-left: 1px solid #666;
  border-top: 2px solid #666;
}
.desk.left {
  flex: 142 0 0;
  background: linear-gradient(to left, #585858, #ababab 13px);
}
.desk.right {
  flex: 211 0 0;
  background: linear-gradient(to right, #585858, #ababab 13px);
}
.sheet {
  position: relative;
  flex: none;
  width: 958px;
  background: #fff;
}
.schematic {
  display: block;
  width: 958px;
  height: 608px;
  shape-rendering: crispEdges;
}
.schematic circle {
  shape-rendering: auto;
}
.frame path {
  fill: none;
  stroke: #708070;
}
.zone text {
  font: 9px 'Liberation Sans', Arial, sans-serif;
  text-anchor: middle;
  fill: #8a9a8a;
}
.wire path {
  fill: none;
  stroke: #f00;
}
.dot circle {
  fill: #f00;
}
.part circle {
  fill: #fff;
  stroke: #000;
}
.part path {
  fill: none;
  stroke: #000;
}
.label text {
  font: bold 13px 'Liberation Sans', Arial, sans-serif;
}

.scroll {
  display: flex;
  flex-direction: column;
  width: 17px;
  padding: 2px 0 0 1px;
}
.scroll button {
  height: 17px;
  display: grid;
  place-items: center;
}
.scroll svg {
  width: 10px;
  height: 6px;
  fill: none;
  stroke: #505050;
  stroke-width: 2;
}
.track {
  flex: 1;
  padding-top: 8px;
}
.thumb {
  height: 86%;
  background: #cdcdcd;
}

.tabs {
  display: flex;
  align-items: flex-start;
  height: 25px;
  padding: 0 3px;
}
.tabs button {
  display: flex;
  align-items: center;
  gap: 4px;
  height: 21px;
  padding: 1px 4px 0 3px;
  border: 1px solid #222;
  border-top: 0;
  border-left-color: #999;
  border-bottom-width: 2px;
  border-radius: 0 0 4px 4px;
}
.tabs .current {
  height: 24px;
  margin-top: -1px;
  padding-top: 2px;
  background: #f0f0f0;
}
.tabs .windows {
  width: 15px;
  height: 15px;
  margin: 5px 0 0 auto;
  padding: 0;
  border: 1px solid;
  border-color: #fff #888 #888 #fff;
  border-radius: 0;
}
.windows svg {
  width: 12px;
  height: 12px;
  fill: #fff;
  stroke: #000090;
}

.instruments {
  width: 26px;
}
.rack {
  display: flex;
  flex-direction: column;
  align-items: center;
  padding: 14px 2px 1px 1px;
  border-right: 1px solid #888;
  border-bottom: 1px solid #888;
}
.rack .tool {
  height: 21px;
  padding: 2px 0 3px;
}
.hsep {
  width: 22px;
  height: 1px;
  margin: 3px 0 4px;
  background: #999;
}
.flyout {
  height: 9px;
  margin-bottom: 3px;
  display: grid;
  place-items: center;
}
.flyout::after {
  content: '';
  border: 3px solid transparent;
  border-left-color: #000;
  border-right: 0;
}
.flyout.off::after {
  border-left-color: #aaa;
}

.status {
  display: flex;
  align-items: center;
  height: 17px;
  padding-top: 2px;
  border-top: 1px solid #ccc;
}
.msg {
  flex: 1;
  text-align: center;
  padding-left: 460px;
}
.tran {
  width: 186px;
  padding-left: 4px;
  border-left: 1px solid #ccc;
}
.progress {
  display: flex;
  gap: 2px;
  width: 62px;
  padding-left: 2px;
  border-left: 1px solid #ccc;
}
.progress i {
  width: 6px;
  height: 12px;
  border-left: 1px solid #aaa;
  border-top: 1px solid #aaa;
}

.grapher {
  position: absolute;
  left: 190px;
  top: 36px;
  width: 692px;
  height: 471px;
  display: flex;
  flex-direction: column;
  background: #f0f0f0;
  border: 1px solid #68589c;
  box-shadow: 0 4px 14px rgba(0, 0, 0, 0.4);
}
.probe {
  position: absolute;
  left: 0;
  top: 275px;
  width: 6px;
  height: 22px;
  fill: #f00;
}
.grapher header {
  display: flex;
  align-items: center;
  height: 30px;
  padding-left: 8px;
  background: #68589c;
  color: #fff;
}
.grapher h2 {
  flex: 1;
}
.grapher header button {
  display: grid;
  place-items: center;
  width: 46px;
  height: 30px;
}
.grapher header button:disabled {
  opacity: 0.15;
}
.grapher header svg {
  width: 12px;
  height: 12px;
  fill: none;
  stroke: #fff;
}
.grapher nav {
  display: flex;
  align-items: center;
  gap: 14px;
  height: 25px;
  padding: 1px 0 0 10px;
  border-bottom: 1px solid #aaa;
}
.gtools {
  display: flex;
  align-items: flex-start;
  height: 24px;
  border-bottom: 1px solid #aaa;
}
.gtools .tool {
  width: 23px;
  padding: 0 4px 0 3px;
}
.gtools .sep {
  margin: 1px 2px;
}
.gtools .active {
  background: #cce4f7;
  box-shadow: inset 0 0 0 1px #99c9ef;
}
.gtabs {
  display: flex;
  height: 20px;
}
.gtabs button {
  padding: 0 5px 0 8px;
  border-right: 1px solid #444;
}
.plot {
  flex: 1;
  margin: 0 3px 2px 3px;
  border: 2px solid;
  border-color: #f8f8f8 #777 #777 #fff;
  background: #000;
  overflow: hidden;
}
.chart {
  display: block;
  width: 680px;
  height: 308px;
}
.chart text {
  fill: #fff;
  font-family: 'Liberation Sans', Arial, sans-serif;
}
.title text {
  font-size: 22px;
  text-anchor: middle;
}
.name {
  font-size: 16px;
  text-anchor: middle;
}
.tick {
  font-size: 13px;
}
.end {
  text-anchor: end;
}
.mid {
  text-anchor: middle;
}
.gridlines path {
  stroke: #aaa;
  stroke-dasharray: 4 3;
}
.axis path {
  fill: none;
  stroke: #fff;
}
.trace {
  fill: none;
  stroke: #f00;
  stroke-width: 1.5;
}
.mark {
  fill: #300;
  stroke: #fff;
}
.glegend {
  display: flex;
  align-items: center;
  gap: 1px;
  padding-left: 5px;
  color: #fff;
}
.glegend svg {
  width: 5px;
  height: 16px;
  margin-top: 12px;
  fill: #f00;
}
.glegend input {
  appearance: none;
  width: 10px;
  height: 10px;
  margin: 12px 2px 0 0;
  background: #fff;
  display: grid;
  place-items: center;
}
.glegend input:checked::after {
  content: '';
  width: 4px;
  height: 7px;
  border: solid #000;
  border-width: 0 2px 2px 0;
  transform: rotate(45deg);
}
.glegend label {
  display: flex;
  flex-direction: column;
  font: 11px/17px 'Liberation Sans', Arial, sans-serif;
}
.glegend label span + span {
  border-top: 1px solid #f00;
  width: 44px;
}
.grapher footer {
  display: flex;
  justify-content: space-between;
  align-items: center;
  height: 20px;
  padding: 1px 2px 0;
  border-top: 1px solid #fff;
}
.grip {
  align-self: flex-end;
  width: 9px;
  height: 9px;
  margin-bottom: 1px;
  background: radial-gradient(circle, #aaa 1px, transparent 1px) 0 0 / 3px 3px;
  clip-path: polygon(100% 0, 100% 100%, 0 100%);
}
</style>
